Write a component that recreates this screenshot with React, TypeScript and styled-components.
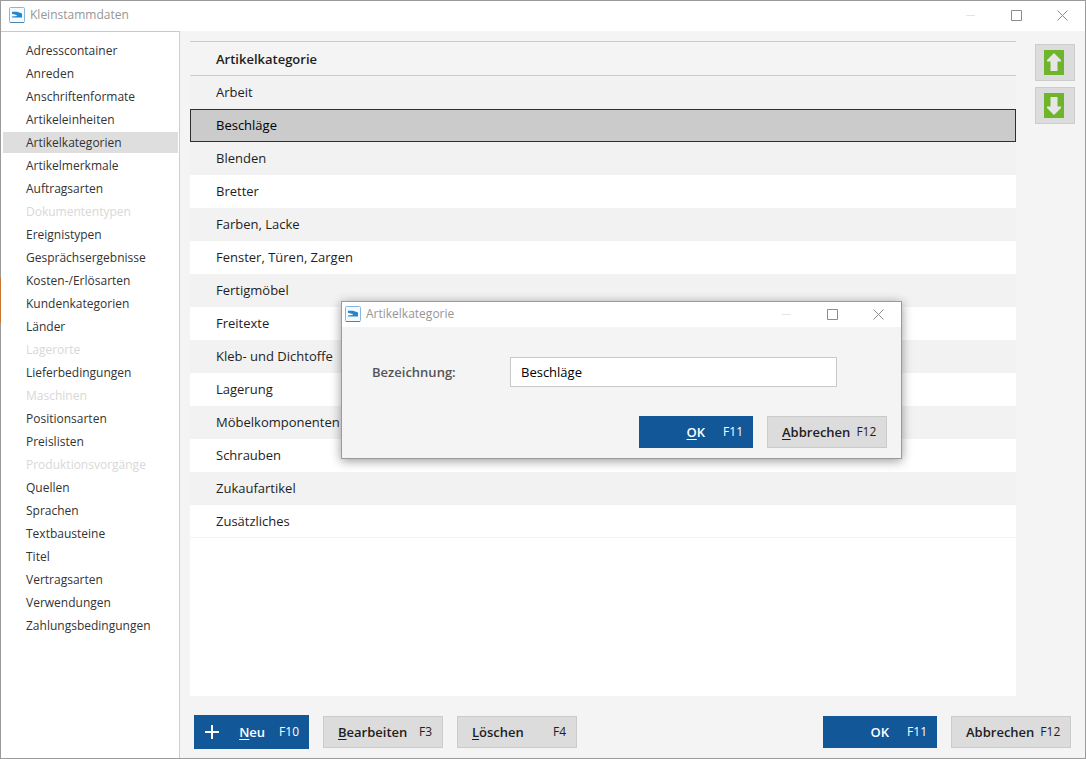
import React, { useState } from "react";
import styled, { createGlobalStyle, css } from "styled-components";

const GlobalStyle = createGlobalStyle`
  * { box-sizing: border-box; }
  body {
    margin: 0;
    background: #f4f4f4;
    font-family: "Open Sans", "Noto Sans", sans-serif;
    font-size: 13px;
    color: #1e1e1e;
  }
  button, input { font: inherit; color: inherit; }
`;

const AppWindow = styled.div`
  position: relative;
  display: flex;
  flex-direction: column;
  min-height: 100vh;
  border: 1px solid #9b9b9b;
  background: #f4f4f4;
`;

const DesktopEdge = styled.div`
  position: absolute;
  left: -1px;
  top: 277px;
  width: 1px;
  height: 45px;
  background: #c9752f;
`;

const TitleBar = styled.header<{ $compact?: boolean }>`
  display: flex;
  align-items: center;
  height: ${(p) => (p.$compact ? 25 : 30)}px;
  padding: ${(p) => (p.$compact ? "0 0 1px 3px" : "0 0 2px 8px")};
  background: #fff;
`;

const Title = styled.h1`
  flex: 1;
  margin: 0 0 0 5px;
  font-size: 12px;
  font-weight: 400;
  line-height: 16px;
  color: #969696;
`;

const Caption = styled.button<{ $faint?: boolean }>`
  display: flex;
  align-items: center;
  justify-content: center;
  width: 46px;
  height: 23px;
  padding: 0;
  border: 0;
  background: transparent;
  color: ${(p) => (p.$faint ? "#e4e4e4" : "#8c8c8c")};
`;

const Body = styled.div`
  flex: 1;
  display: flex;
`;

const Sidebar = styled.nav`
  flex: none;
  width: 179px;
  padding: 8px 1px 0 2px;
  border-top: 1px solid #b9cde0;
  border-right: 1px solid #c3d3de;
  background: #fff;
`;

const NavList = styled.ul`
  display: flex;
  flex-direction: column;
  gap: 2px;
  margin: 0;
  padding: 0;
  list-style: none;
`;

const NavItem = styled.button<{ $active: boolean }>`
  display: block;
  width: 100%;
  height: 21px;
  padding: 0 0 0 23px;
  border: 0;
  background: ${(p) => (p.$active ? "#dedede" : "transparent")};
  font-size: 12px;
  line-height: 20px;
  text-align: left;
  color: #333;
  &:disabled { color: #d8d8d8; }
`;

const Content = styled.main`
  flex: 1;
  display: flex;
  flex-direction: column;
  padding: 10px 14px 9px 10px;
`;

const ListArea = styled.div`
  flex: 1;
  display: flex;
  gap: 19px;
`;

const ListPanel = styled.div`
  flex: 1;
  background: #fff;
`;

const CategoryTable = styled.table`
  width: 100%;
  border-collapse: separate;
  border-spacing: 0;
`;

const HeadCell = styled.th`
  height: 35px;
  padding: 0 26px;
  border-top: 1px solid #cbcbcb;
  border-bottom: 1px solid #cbcbcb;
  background: #f4f4f4;
  font-weight: 600;
  line-height: 18px;
  text-align: left;
`;

const Cell = styled.td`
  height: 33px;
  padding: 0 26px 2px;
  line-height: 18px;
`;

const Row = styled.tr<{ $selected: boolean }>`
  background: #fff;
  &:nth-child(odd) { background: #f2f2f2; }
  &:last-child ${Cell} { padding-bottom: 1px; border-bottom: 1px solid #f4f4f4; }
  ${(p) =>
    p.$selected &&
    css`
      ${Cell} {
        padding: 0 25px 2px;
        border: 1px solid #2f2f2f;
        background: #cbcbcb;
        color: #000;
      }
    `}
`;

const SortButtons = styled.div`
  display: flex;
  flex-direction: column;
  gap: 6px;
  padding: 3px 0 0;
  margin-right: -4px;
`;

const SortButton = styled.button`
  display: flex;
  align-items: center;
  width: 40px;
  height: 37px;
  padding: 0 0 0 8px;
  border: 1px solid #cdcdcd;
  background: #dcdcdc;
`;

const Footer = styled.footer`
  display: flex;
  align-items: center;
  gap: 14px;
  padding: 19px 0 0 4px;
`;

const Spacer = styled.div`
  flex: 1;
`;

const ActionButton = styled.button<{ $primary?: boolean; $tall?: boolean }>`
  display: flex;
  align-items: center;
  width: ${(p) => (p.$tall ? 115 : p.$primary ? 114 : 120)}px;
  height: ${(p) => (p.$tall ? 34 : 32)}px;
  padding: 0 ${(p) => (p.$primary ? 9 : 10)}px 0 ${(p) => (p.$tall ? 9 : 14)}px;
  border: 1px solid ${(p) => (p.$primary ? "#125899" : "#cbcbcb")};
  background: ${(p) => (p.$primary ? "#125899" : "#dcdcdc")};
  color: ${(p) => (p.$primary ? "#fff" : "#1e1e1e")};
  line-height: 18px;
`;

const ButtonLabel = styled.span<{ $end?: boolean }>`
  flex: 1;
  font-weight: 600;
  text-align: ${(p) => (p.$end ? "right" : "left")};
  u { text-underline-offset: 2px; }
`;

const Shortcut = styled.span<{ $gap?: number }>`
  margin-left: ${(p) => p.$gap ?? 6}px;
  font-size: 12px;
`;

const Dialog = styled.section`
  position: absolute;
  left: 340px;
  top: 300px;
  width: 561px;
  border: 1px solid #9a9a9a;
  background: #f4f4f4;
  box-shadow: 0 2px 10px rgba(0, 0, 0, 0.4);
`;

const DialogForm = styled.form`
  display: flex;
  flex-direction: column;
  gap: 29px;
  padding: 30px 14px 10px 30px;
`;

const Field = styled.div`
  display: flex;
  align-items: center;
  padding-right: 50px;
`;

const FieldLabel = styled.label`
  width: 138px;
  font-weight: 600;
  color: #555;
`;

const TextInput = styled.input`
  flex: 1;
  min-width: 0;
  height: 30px;
  padding: 0 10px;
  border: 1px solid #c9c9c9;
  border-radius: 0;
  outline: none;
  background: #fff;
  color: #000;
`;

const DialogActions = styled.div`
  display: flex;
  justify-content: flex-end;
  gap: 14px;
`;

const AppLogo = () => (
  <svg width="16" height="16" viewBox="0 0 16 16" aria-hidden="true">
    <rect x="0.5" y="0.5" width="15" height="15" rx="1" fill="#f5f9fc" stroke="#86b8dd" />
    <path d="M1 15.5H15" stroke="#4d86ad" />
    <path d="M3 4.700H8L13 6.500V10.500H3V9.400L8 9L7.500 8L3 6.800Z" fill="#2286cd" />
  </svg>
);

const WindowControls = () => (
  <>
    <Caption type="button" $faint aria-label="Minimieren">
      <svg width="11" height="11"><path d="M1 5.5H10" stroke="currentColor" /></svg>
    </Caption>
    <Caption type="button" aria-label="Maximieren">
      <svg width="11" height="11"><path d="M.5 .5H10.500V10.500H.5Z" fill="none" stroke="currentColor" /></svg>
    </Caption>
    <Caption type="button" aria-label="Schließen">
      <svg width="11" height="11"><path d="M.5 .5L10.500 10.500M10.500 .5L.5 10.500" stroke="currentColor" /></svg>
    </Caption>
  </>
);

const ArrowIcon = ({ down }: { down?: boolean }) => (
  <svg width="20" height="25" viewBox="0 0 20 25" aria-hidden="true">
    <rect width="20" height="25" fill="#6fb52c" />
    <path
      d="M10 3L17 10V11.500H13.500V21H6.500V11.500H3V10Z"
      fill="#e6e6e6"
      transform={down ? "rotate(180 10 12.5)" : undefined}
    />
  </svg>
);

const PlusIcon = () => (
  <svg width="16" height="16" viewBox="0 0 16 16" aria-hidden="true">
    <path d="M8 1V15M1 8H15" stroke="#fff" strokeWidth="2" />
  </svg>
);

const sections: { name: string; disabled?: boolean }[] = [
  { name: "Adresscontainer" },
  { name: "Anreden" },
  { name: "Anschriftenformate" },
  { name: "Artikeleinheiten" },
  { name: "Artikelkategorien" },
  { name: "Artikelmerkmale" },
  { name: "Auftragsarten" },
  { name: "Dokumententypen", disabled: true },
  { name: "Ereignistypen" },
  { name: "Gesprächsergebnisse" },
  { name: "Kosten-/Erlösarten" },
  { name: "Kundenkategorien" },
  { name: "Länder" },
  { name: "Lagerorte", disabled: true },
  { name: "Lieferbedingungen" },
  { name: "Maschinen", disabled: true },
  { name: "Positionsarten" },
  { name: "Preislisten" },
  { name: "Produktionsvorgänge", disabled: true },
  { name: "Quellen" },
  { name: "Sprachen" },
  { name: "Textbausteine" },
  { name: "Titel" },
  { name: "Vertragsarten" },
  { name: "Verwendungen" },
  { name: "Zahlungsbedingungen" },
];

const categories = [
  "Arbeit",
  "Beschläge",
  "Blenden",
  "Bretter",
  "Farben, Lacke",
  "Fenster, Türen, Zargen",
  "Fertigmöbel",
  "Freitexte",
  "Kleb- und Dichtoffe",
  "Lagerung",
  "Möbelkomponenten",
  "Schrauben",
  "Zukaufartikel",
  "Zusätzliches",
];

export default function App() {
  const [section, setSection] = useState("Artikelkategorien");
  const [category, setCategory] = useState("Beschläge");
  const [name, setName] = useState("Beschläge");

  return (
    <>
      <GlobalStyle />
      <AppWindow>
        <DesktopEdge />
        <TitleBar>
          <AppLogo />
          <Title>Kleinstammdaten</Title>
          <WindowControls />
        </TitleBar>
        <Body>
          <Sidebar>
            <NavList>
              {sections.map((s) => (
                <li key={s.name}>
                  <NavItem
                    type="button"
                    disabled={s.disabled}
                    $active={s.name === section}
                    onClick={() => setSection(s.name)}
                  >
                    {s.name}
                  </NavItem>
                </li>
              ))}
            </NavList>
          </Sidebar>
          <Content>
            <ListArea>
              <ListPanel>
                <CategoryTable>
                  <thead>
                    <tr><HeadCell scope="col">Artikelkategorie</HeadCell></tr>
                  </thead>
                  <tbody>
                    {categories.map((c) => (
                      <Row key={c} $selected={c === category} onClick={() => setCategory(c)}>
                        <Cell>{c}</Cell>
                      </Row>
                    ))}
                  </tbody>
                </CategoryTable>
              </ListPanel>
              <SortButtons>
                <SortButton type="button" aria-label="Nach oben"><ArrowIcon /></SortButton>
                <SortButton type="button" aria-label="Nach unten"><ArrowIcon down /></SortButton>
              </SortButtons>
            </ListArea>
            <Footer>
              <ActionButton type="button" $primary $tall>
                <PlusIcon />
                <ButtonLabel $end><u>N</u>eu</ButtonLabel>
                <Shortcut $gap={14}>F10</Shortcut>
              </ActionButton>
              <ActionButton type="button">
                <ButtonLabel><u>B</u>earbeiten</ButtonLabel>
                <Shortcut>F3</Shortcut>
              </ActionButton>
              <ActionButton type="button">
                <ButtonLabel><u>L</u>öschen</ButtonLabel>
                <Shortcut>F4</Shortcut>
              </ActionButton>
              <Spacer />
              <ActionButton type="button" $primary>
                <ButtonLabel $end>OK</ButtonLabel>
                <Shortcut $gap={18}>F11</Shortcut>
              </ActionButton>
              <ActionButton type="button">
                <ButtonLabel>Abbrechen</ButtonLabel>
                <Shortcut>F12</Shortcut>
              </ActionButton>
            </Footer>
          </Content>
        </Body>
        <Dialog role="dialog" aria-label="Artikelkategorie">
          <TitleBar $compact>
            <AppLogo />
            <Title as="h2">Artikelkategorie</Title>
            <WindowControls />
          </TitleBar>
          <DialogForm onSubmit={(e) => e.preventDefault()}>
            <Field>
              <FieldLabel htmlFor="bezeichnung">Bezeichnung:</FieldLabel>
              <TextInput id="bezeichnung" value={name} onChange={(e) => setName(e.target.value)} />
            </Field>
            <DialogActions>
              <ActionButton type="submit" $primary>
                <ButtonLabel $end><u>O</u>K</ButtonLabel>
                <Shortcut $gap={18}>F11</Shortcut>
              </ActionButton>
              <ActionButton type="button">
                <ButtonLabel><u>A</u>bbrechen</ButtonLabel>
                <Shortcut>F12</Shortcut>
              </ActionButton>
            </DialogActions>
          </DialogForm>
        </Dialog>
      </AppWindow>
    </>
  );
}
